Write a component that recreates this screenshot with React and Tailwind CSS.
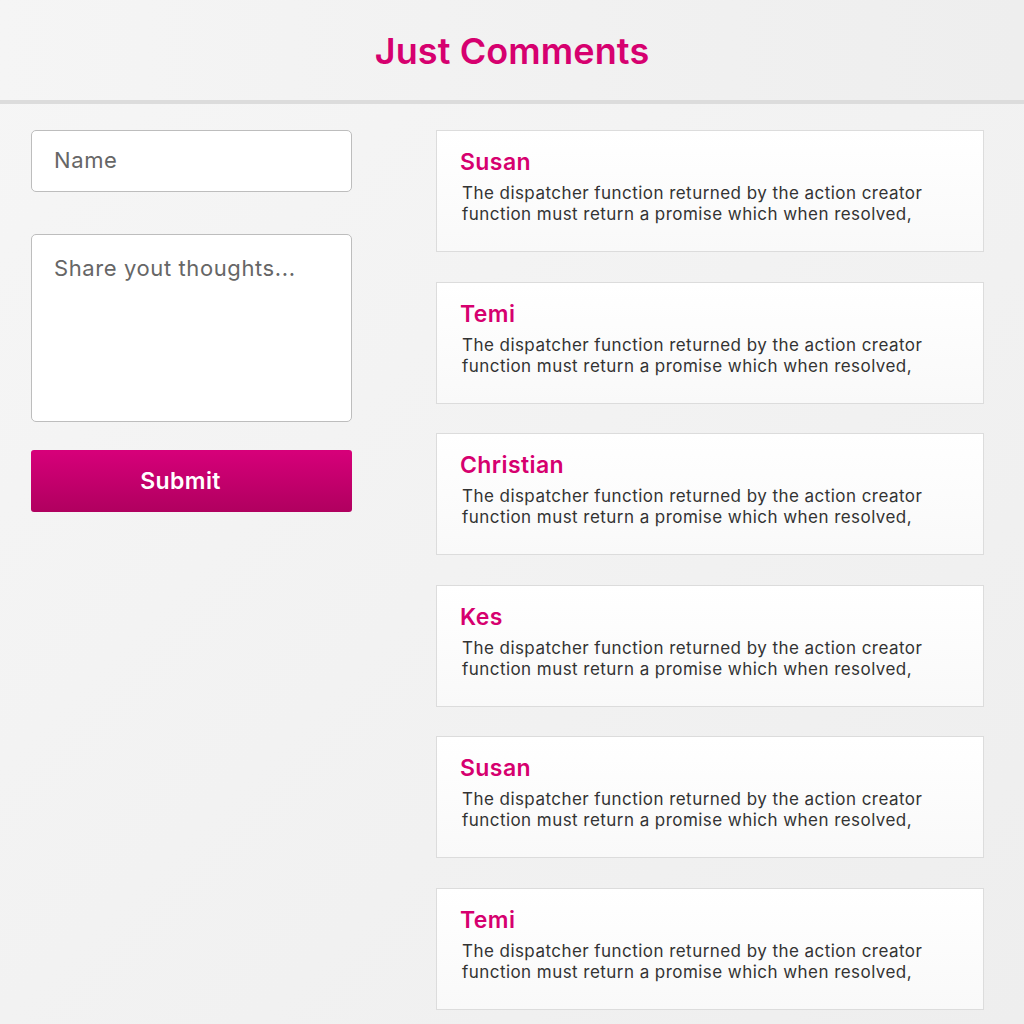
import React from 'react'

const comments = [
  { name: 'Susan' },
  { name: 'Temi' },
  { name: 'Christian' },
  { name: 'Kes' },
  { name: 'Susan' },
  { name: 'Temi' },
]

const body = 'The dispatcher function returned by the action creator function must return a promise which when resolved,'

export default function App(){
  return (
    <div className="min-h-screen bg-gradient-to-br from-[#f6f6f6] to-[#eeeeee] font-['Inter',sans-serif]">
      <header className="h-[104px] flex items-center justify-center border-b-4 border-[#dcdcdc] bg-gradient-to-r from-[#f5f5f5] to-[#eeeeee]">
        <h1 className="text-[36px] font-semibold text-[#d6006f] tracking-[0.1px] pt-[2px]">Just Comments</h1>
      </header>

      <div className="flex pt-[26px] pl-[31px] pr-[40px]">
        <form className="w-[321px] flex flex-col" onSubmit={e=>e.preventDefault()}>
          <input
            className="h-[62px] px-[22px] pb-[3px] bg-white border border-[#bdbdbd] rounded-[5px] text-[22px] tracking-[0.6px] text-[#333] placeholder:text-[#666] outline-none"
            placeholder="Name"
          />
          <textarea
            className="mt-[42px] h-[188px] px-[22px] pt-[17px] bg-white border border-[#bdbdbd] rounded-[5px] text-[22px] tracking-[0.6px] text-[#333] placeholder:text-[#666] outline-none resize-none"
            placeholder="Share yout thoughts..."
          />
          <button className="mt-[28px] h-[62px] pr-[22px] rounded-[3px] bg-gradient-to-b from-[#d7007a] to-[#b0005f] text-white text-[23px] tracking-[0.4px] font-semibold">
            Submit
          </button>
        </form>

        <ul className="ml-[84px] flex-1 flex flex-col gap-[29.6px]">
          {comments.map((c, i) => (
            <li key={i} className="h-[122px] border border-[#dcdcdc] bg-gradient-to-b from-white to-[#f9f9f9] pl-[23px] pt-[16px] pr-[20px]">
              <div className="text-[23px] tracking-[0.4px] font-semibold text-[#d6006f] leading-[30px]">{c.name}</div>
              <p className="mt-[6px] ml-[2px] text-[17px] tracking-[0.45px] leading-[21px] text-[#333] max-w-[500px]">{body}</p>
            </li>
          ))}
        </ul>
      </div>
    </div>
  )
}
